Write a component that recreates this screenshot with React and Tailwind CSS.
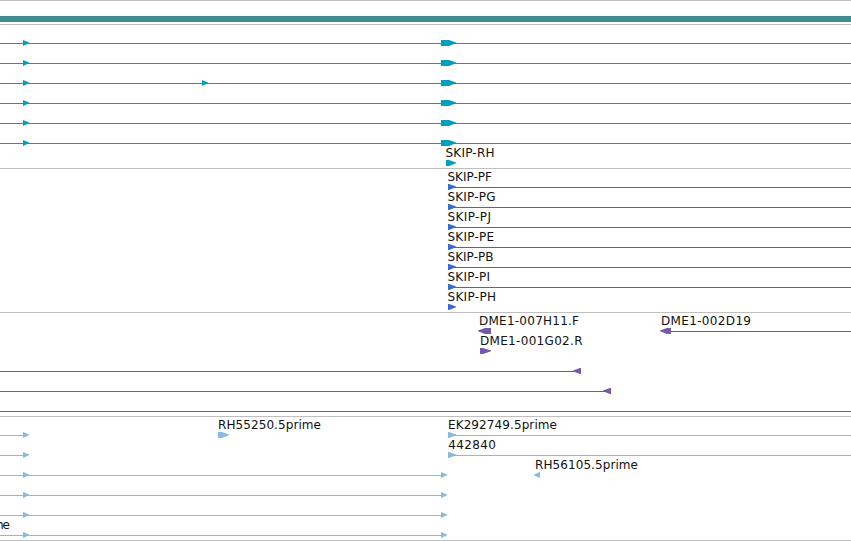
const WIDTH = 851;

// A lane holds lines [from, to], arrows [left, right, direction, head length]
// and labels [text, x, width].
const transcript = (...extra) => ({
  lines: [[0, WIDTH]],
  arrows: [[23, 29, 'r', 6], ...extra, [441, 456, 'r', 7]],
});
const protein = (name, width, line = true) => ({
  lines: line ? [[448, WIDTH]] : [],
  arrows: [[448, 456, 'r', 7]],
  labels: [[name, 447.5, width]],
});
const aligned = () => ({
  lines: [[0, 441]],
  arrows: [[23, 29, 'r', 6], [441, 447, 'r', 6]],
});

const tracks = [
  {
    id: 'transcripts',
    color: 'text-[#009fbd]',
    lanes: [
      transcript(),
      transcript(),
      transcript([202, 208, 'r', 6]),
      transcript(),
      transcript(),
      transcript(),
      { arrows: [[446, 456, 'r', 7]], labels: [['SKIP-RH', 445.5, 49]] },
    ],
  },
  {
    id: 'proteins',
    color: 'text-[#346dce]',
    lanes: [
      protein('SKIP-PF', 44.5),
      protein('SKIP-PG', 48),
      protein('SKIP-PJ', 43.5),
      protein('SKIP-PE', 46.5),
      protein('SKIP-PB', 46),
      protein('SKIP-PI', 42.5),
      protein('SKIP-PH', 48.5, false),
    ],
  },
  {
    id: 'probes',
    color: 'text-[#7459a8]',
    lanes: [
      {
        lines: [[671, WIDTH]],
        arrows: [[478, 491, 'l', 7], [660, 671, 'l', 7]],
        labels: [['DME1-007H11.F', 479, 100], ['DME1-002D19', 661, 90]],
      },
      { arrows: [[480, 491, 'r', 8]], labels: [['DME1-001G02.R', 480, 102.5]] },
      { lines: [[0, 574]], arrows: [[573, 581, 'l', 7]] },
      { lines: [[0, 605]], arrows: [[603, 611, 'l', 7]] },
      { lines: [[0, WIDTH]] },
    ],
  },
  {
    id: 'est',
    color: 'text-[#87badd]',
    lanes: [
      {
        lines: [[0, 23], [448, WIDTH]],
        arrows: [[23, 29, 'r', 6], [218, 229, 'r', 7], [448, 456, 'r', 7]],
        labels: [['RH55250.5prime', 218, 103], ['EK292749.5prime', 448, 109]],
      },
      {
        lines: [[0, 23], [448, WIDTH]],
        arrows: [[23, 29, 'r', 6], [448, 456, 'r', 7]],
        labels: [['442840', 448.3, 47.5]],
      },
      {
        lines: [[0, 441]],
        arrows: [[23, 29, 'r', 6], [441, 447, 'r', 6], [534, 540, 'l', 6]],
        labels: [['RH56105.5prime', 535, 103]],
      },
      aligned(),
      aligned(),
      { ...aligned(), labels: [['me', -8, 18]] },
    ],
  },
];

function Arrow({ left, right, dir, head }) {
  const points =
    dir === 'r'
      ? `${left},14 ${right - head},14 ${right},16.6 ${right},17.2 ${right - head},20 ${left},20`
      : `${right},14 ${left + head},14 ${left},16.6 ${left},17.2 ${left + head},20 ${right},20`;
  return <polygon points={points} fill="currentColor" />;
}

function Lane({ lines = [], arrows = [], labels = [] }) {
  return (
    <svg width={WIDTH} height="20" viewBox={`0 0 ${WIDTH} 20`} className="block shrink-0">
      {lines.map(([from, to]) => (
        <rect key={from} x={from} y="17" width={to - from} height="1" fill="currentColor" />
      ))}
      {arrows.map(([left, right, dir, head]) => (
        <Arrow key={left} left={left} right={right} dir={dir} head={head} />
      ))}
      {labels.map(([text, x, width]) => (
        <text key={text} x={x} y="11" textLength={width} className="fill-[#111111] text-[12px]">
          {text}
        </text>
      ))}
    </svg>
  );
}

export default function App() {
  return (
    <main className="flex h-[541px] w-[851px] flex-col overflow-hidden bg-white font-['DejaVu_Sans',sans-serif]">
      <section className="h-6 border-t border-[#bfbfbf] pt-[15px]">
        <div className="h-1.5 bg-[#3d8d92]" />
      </section>
      {tracks.map((track) => (
        <section
          key={track.id}
          className={`flex flex-col border-t border-t-[#bfbfbf] pt-px pb-0.5 ${track.color}`}
        >
          {track.lanes.map((lane, i) => (
            <Lane key={i} {...lane} />
          ))}
        </section>
      ))}
      <div className="h-px bg-[#bfbfbf]" />
    </main>
  );
}
